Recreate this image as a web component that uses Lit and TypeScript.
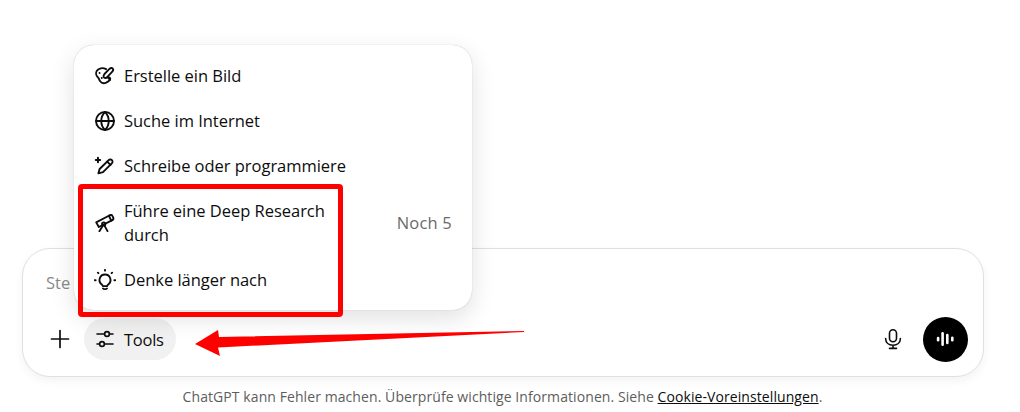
import { LitElement, html, css, svg } from "lit";
import { customElement } from "lit/decorators.js";

const ic = (c: unknown) => html`<svg class="ic" viewBox="0 0 20 20" fill="none" stroke="#0d0d0d" stroke-width="1.7" stroke-linecap="round" stroke-linejoin="round">${c}</svg>`;

const items = [
  { t: "Erstelle ein Bild", i: svg`<path d="M17 3.200c-1-.9-2.200-.4-3.200.5L9.500 8.200c-.9 1-1.200 2.400-.3 3.200.9.700 2.200.4 3-.6l4.400-4.700c.9-1 1.200-2 .4-2.900z"/><path d="M11 3.800C8 2.200 4.200 2.800 2.600 5.200 1.400 7 1.900 9.600 3.400 11c1.200 1.100 1.200 2.300 2.200 3.700 1.100 1.600 3.500 2.200 5.500 1.300 1.400-.6 2.800-1.700 3.500-2.900.5-.9-.2-1.600-1-1.900"/><path d="M12.500 11.500l2.200 2M5 7.300h.1M7 11.800h.1"/>` },
  { t: "Suche im Internet", i: svg`<circle cx="10" cy="10" r="8.200"/><path d="M2 10h16M10 1.800c2.300 2.300 3.400 5 3.400 8.200s-1.100 5.900-3.400 8.200c-2.300-2.300-3.400-5-3.400-8.200s1.100-5.900 3.400-8.200z"/>` },
  { t: "Schreibe oder programmiere", i: svg`<path d="M13.300 4.700c.8-.8 2.200-.9 3-.1.800.8.700 2.200-.1 3L8.200 15.600l-4.200 1.100 1.100-4z"/><path d="M12 6l3 3M3.600 2.500v4M1.600 4.500h4" stroke-width="1.800"/>` },
  { t: "Führe eine Deep Research durch", right: "Noch 5", i: svg`<path d="M2 9.400l11.500-6 2.200 4.400-11.300 5.800z"/><path d="M13.500 3.400c1-.8 2.700-1 3.100-.1l1 2.100c.3.900-.4 1.900-2 2.500"/><path d="M9.500 12.400l2.800 5M7.700 12.900l-2.800 4.500"/><circle cx="8.800" cy="10.900" r="1.500"/>` },
  { t: "Denke länger nach", i: svg`<path d="M10 5a5 5 0 0 0-3 9c.6.5.9 1 1 1.600h4c.1-.6.4-1.100 1-1.600a5 5 0 0 0-3-9z"/><path d="M8.200 17.800c.5.700 3.100.7 3.600 0"/><path d="M10 .8v.7M3.500 3.300l.5.5M16.500 3.300l-.5.5M.7 10.200h.8M18.500 10.200h.8"/>` },
];

@customElement("app-root")
export class AppRoot extends LitElement {
  static styles = css`
    :host { display: block; position: relative; width: 1020px; height: 412px; background: #fff; overflow: hidden; font-family: "Open Sans", "Noto Sans", sans-serif; color: #0d0d0d; }
    .page { height: 412px; box-sizing: border-box; padding: 248px 36px 0 22px; display: flex; flex-direction: column; }
    .composer { height: 129px; box-sizing: border-box; border: 1px solid #e0e0e0; border-radius: 28px; box-shadow: 0 4px 10px rgba(0,0,0,.05); padding: 23px 15px 15px 16px; display: flex; flex-direction: column; justify-content: space-between; background: #fff; }
    .ph { font-size: 16.500px; line-height: 22px; color: #8a8a8a; padding-left: 7px; }
    .bar { display: flex; align-items: center; height: 44px; margin-top: auto; }
    .plus { width: 40px; height: 40px; display: flex; align-items: center; justify-content: center; margin-left: 1px; }
    .tools { height: 42px; margin-left: 4px; padding: 0 12px 0 11px; background: #f1f1f1; border-radius: 21px; display: flex; align-items: center; gap: 9px; font-size: 16.500px; letter-spacing: -.25px; }
    .spacer { flex: 1; }
    .mic { width: 36px; height: 36px; display: flex; align-items: center; justify-content: center; margin-right: 12px; }
    .voice { width: 45px; height: 45px; border-radius: 50%; background: #000; display: flex; align-items: center; justify-content: center; }
    .foot { margin-top: 10px; text-align: center; font-size: 14px; line-height: 19px; color: #5d5d5d; letter-spacing: .08px; padding-right: 1px; }
    .foot a { color: #0d0d0d; text-decoration: underline; }
    .menu { position: absolute; left: 74px; top: 45px; width: 398px; height: 265px; box-sizing: border-box; padding: 8px 0; background: #fff; border-radius: 20px; box-shadow: 0 0 1px rgba(0,0,0,.3), 0 8px 24px rgba(0,0,0,.12); }
    .row { display: flex; align-items: center; padding: 0 20px 0 20px; gap: 8px; height: 45px; font-size: 16.500px; letter-spacing: -.03px; line-height: 24px; }
    .row.two { height: 69px; }
    .row .t { width: 220px; white-space: normal; }
    .row:not(.two) .t { width: auto; white-space: nowrap; }
    .r { margin-left: auto; color: #6a6a6a; letter-spacing: .2px; }
    .ic { width: 22px; height: 22px; flex: none; }
    .anno { position: absolute; left: 0; top: 0; width: 1020px; height: 412px; pointer-events: none; }
  `;

  render() {
    return html`
      <div class="page">
        <div class="composer">
          <div class="ph">Ste</div>
          <div class="bar">
            <div class="plus"><svg width="22" height="22" viewBox="0 0 22 22" fill="none" stroke="#0d0d0d" stroke-width="1.7" stroke-linecap="round"><path d="M11 2.500v17M2.500 11h17"/></svg></div>
            <div class="tools">
              <svg width="20" height="20" viewBox="0 0 20 20" fill="none" stroke="#0d0d0d" stroke-width="1.600" stroke-linecap="round"><path d="M2 5h7.600M14.400 5H18M2 15h2.600M9.400 15H18"/><circle cx="12" cy="5" r="2.400"/><circle cx="7" cy="15" r="2.400"/></svg>
              <span>Tools</span>
            </div>
            <div class="spacer"></div>
            <div class="mic"><svg width="22" height="22" viewBox="0 0 22 22" fill="none" stroke="#0d0d0d" stroke-width="1.600" stroke-linecap="round"><rect x="7.500" y="1.800" width="7" height="12" rx="3.500"/><path d="M3.600 10.500c0 4.200 3.300 6.700 7.400 6.700s7.400-2.500 7.400-6.700M11 17.300v3M7.500 20.400h7"/></svg></div>
            <div class="voice"><svg width="20" height="20" viewBox="0 0 20 20" fill="#fff"><rect x=".8" y="7.700" width="2.600" height="4.800" rx="1.300"/><rect x="5.300" y="3" width="2.600" height="14" rx="1.300"/><rect x="10" y="4.800" width="2.600" height="10.400" rx="1.300"/><rect x="15" y="7.500" width="2.600" height="5" rx="1.300"/></svg></div>
          </div>
        </div>
        <div class="foot">ChatGPT kann Fehler machen. Überprüfe wichtige Informationen. Siehe <a>Cookie-Voreinstellungen</a>.</div>
      </div>
      <div class="menu">
        ${items.map((it) => html`<div class="row ${it.right ? "two" : ""}">${ic(it.i)}<span class="t">${it.t}</span>${it.right ? html`<span class="r">${it.right}</span>` : ""}</div>`)}
      </div>
      <svg class="anno" viewBox="0 0 1020 412">
        <rect x="80.500" y="186.500" width="260" height="128" rx="1.500" fill="none" stroke="#ff0000" stroke-width="5"/>
        <path d="M195 344 L218 330 L219 337 L524 331 L524 332 L218 347.500 L220 356 Z" fill="#ff0000"/>
      </svg>
    `;
  }
}
